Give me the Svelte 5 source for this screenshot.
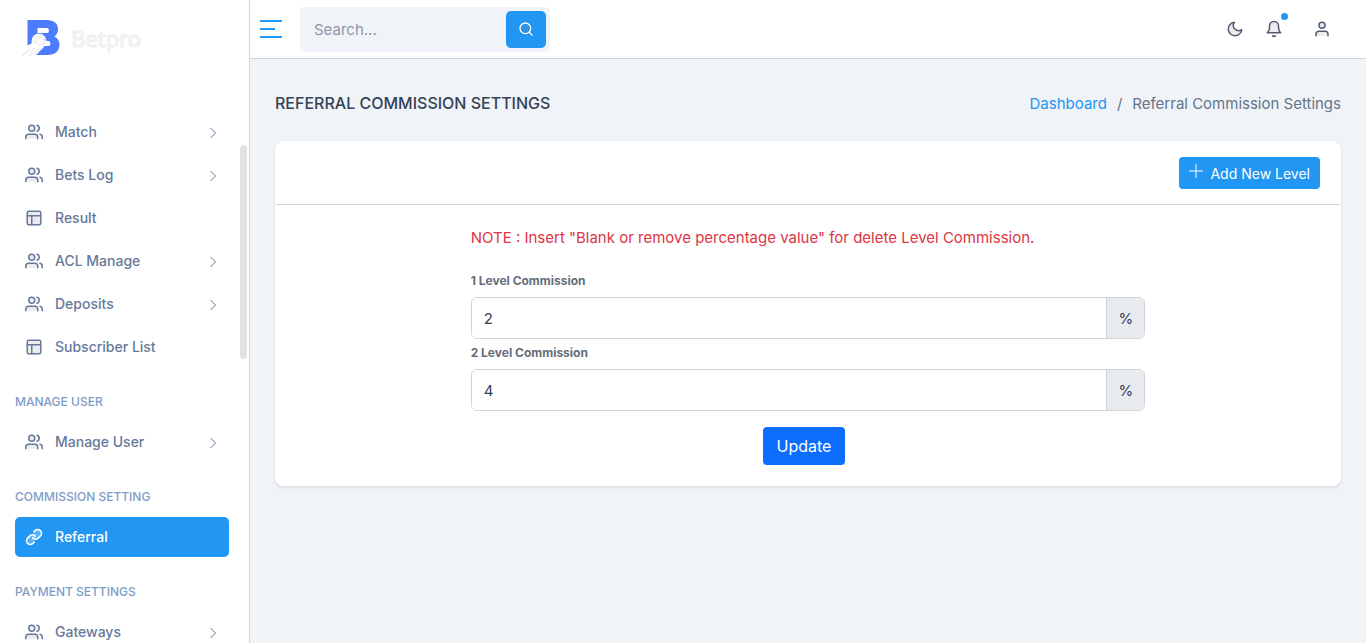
<script>
  const sections = [
    {
      title: '',
      items: [
        { label: 'Match', icon: 'users', children: true },
        { label: 'Bets Log', icon: 'users', children: true },
        { label: 'Result', icon: 'layout' },
        { label: 'ACL Manage', icon: 'users', children: true },
        { label: 'Deposits', icon: 'users', children: true },
        { label: 'Subscriber List', icon: 'layout' }
      ]
    },
    { title: 'Manage User', items: [{ label: 'Manage User', icon: 'users', children: true }] },
    { title: 'Commission Setting', items: [{ label: 'Referral', icon: 'link', active: true }] },
    { title: 'Payment Settings', items: [{ label: 'Gateways', icon: 'users', children: true }] }
  ];

  let levels = $state([{ value: '2' }, { value: '4' }]);
</script>

{#snippet icon(name)}
  <svg class="icon" viewBox="0 0 24 24" aria-hidden="true">
    {#if name === 'users'}
      <path d="M17 21v-2a4 4 0 0 0-4-4H5a4 4 0 0 0-4 4v2" />
      <circle cx="9" cy="7" r="4" />
      <path d="M23 21v-2a4 4 0 0 0-3-3.87M16 3.13a4 4 0 0 1 0 7.75" />
    {:else if name === 'layout'}
      <rect x="3" y="3" width="18" height="18" rx="2" />
      <path d="M3 9h18M9 21V9" />
    {:else if name === 'link'}
      <path d="M10 13a5 5 0 0 0 7.54.54l3-3a5 5 0 0 0-7.07-7.07l-1.72 1.71" />
      <path d="M14 11a5 5 0 0 0-7.54-.54l-3 3a5 5 0 0 0 7.07 7.07l1.71-1.71" />
    {:else if name === 'moon'}
      <path d="M21 12.79A9 9 0 1 1 11.21 3 7 7 0 0 0 21 12.79z" />
    {:else if name === 'bell'}
      <path d="M18 8A6 6 0 0 0 6 8c0 7-3 9-3 9h18s-3-2-3-9" />
      <path d="M13.73 21a2 2 0 0 1-3.46 0" />
    {:else if name === 'user'}
      <path d="M20 21v-2a4 4 0 0 0-4-4H8a4 4 0 0 0-4 4v2" />
      <circle cx="12" cy="7" r="4" />
    {:else if name === 'search'}
      <circle cx="11" cy="11" r="8" />
      <path d="M21 21l-4.35-4.35" />
    {/if}
  </svg>
{/snippet}

<div class="layout">
  <aside class="sidebar">
    <a class="brand" href="#home">
      <svg class="mark" viewBox="0 0 40 38" aria-hidden="true">
        <path fill="#4d7cfe" d="M6.500 1H26c7 0 11 3.500 11 9 0 3.500-1.500 6-3.500 7.500 3 1.500 5 4.500 5 8 0 6.500-4.500 10.500-12 10.500H15l5-6.500-6-7-7.500 4z" />
        <path fill="#fff" d="M16.500 9h9.500q2 0 2 2.500t-2 2.500h-9.500zM20 22h7.500q2 0 2 2.500t-2 2.500H20z" />
        <circle cx="18" cy="22" r="7.500" fill="#fff" />
        <g fill="none" stroke="#d9dce5" stroke-width="0.700">
          <circle cx="18.500" cy="22" r="6" />
          <path d="M16 19l4-1 3 3-1 4-4 1-3-3zM19 16v2M23 21l2-1M18 26l-1 2M15 23l-2 1" />
        </g>
        <path fill="#fff" d="M11 24L2 36l12-8-5 9 9-8-3 7 8-8z" />
        <path fill="none" stroke="#dcdfe6" stroke-width="0.600" d="M10 27L1 37l12-8M14 29l-6 8 11-8M18 30l-4 6" />
      </svg>
      <span>Betpro</span>
    </a>
    <nav>
      {#each sections as section}
        {#if section.title}<h2>{section.title}</h2>{/if}
        <ul>
          {#each section.items as item}
            <li>
              <a class="nav-link" class:active={item.active} href="#{item.label}">
                {@render icon(item.icon)}
                <span>{item.label}</span>
                {#if item.children}
                  <svg class="chevron" viewBox="0 0 8 12" aria-hidden="true"><path d="M1.500 1l5 5-5 5" /></svg>
                {/if}
              </a>
            </li>
          {/each}
        </ul>
      {/each}
    </nav>
    <div class="thumb"></div>
  </aside>

  <div class="main">
    <header>
      <button class="toggle" type="button" aria-label="Toggle menu"><i></i><i></i><i></i></button>
      <form class="search" onsubmit={(e) => e.preventDefault()}>
        <input type="text" placeholder="Search..." aria-label="Search" />
        <button type="submit" aria-label="Search">{@render icon('search')}</button>
      </form>
      <div class="actions">
        <button type="button" aria-label="Dark mode">{@render icon('moon')}</button>
        <button class="bell" type="button" aria-label="Notifications">{@render icon('bell')}<span class="dot"></span></button>
        <button type="button" aria-label="Account">{@render icon('user')}</button>
      </div>
    </header>

    <main>
      <div class="page-head">
        <h1>Referral Commission Settings</h1>
        <div class="crumbs">
          <a href="#dashboard">Dashboard</a><span>/</span><span>Referral Commission Settings</span>
        </div>
      </div>

      <section class="card">
        <div class="card-head">
          <button class="add" type="button">
            <svg viewBox="0 0 14 14" aria-hidden="true"><path d="M7 0v14M0 7h14" /></svg>
            Add New Level
          </button>
        </div>
        <form class="levels" onsubmit={(e) => e.preventDefault()}>
          <p>NOTE : Insert "Blank or remove percentage value" for delete Level Commission.</p>
          {#each levels as level, i}
            <label for="level-{i}">{i + 1} Level Commission</label>
            <div class="group">
              <input id="level-{i}" type="text" bind:value={level.value} />
              <span>%</span>
            </div>
          {/each}
          <button class="update" type="submit">Update</button>
        </form>
      </section>
    </main>
  </div>
</div>

<style>
  :global(body) {
    margin: 0;
    background: #f0f3f8;
    color: #334257;
    font-family: Inter, sans-serif;
    font-size: 15px;
  }
  * { box-sizing: border-box; }
  button, input { font: inherit; color: inherit; }
  button { border: 0; padding: 0; background: none; cursor: pointer; }
  a { text-decoration: none; }

  .icon {
    display: block;
    flex: none;
    width: 18px;
    height: 18px;
    fill: rgba(128, 128, 128, 0.15);
    stroke: currentColor;
    stroke-width: 2;
    stroke-linecap: round;
    stroke-linejoin: round;
  }

  .layout { display: flex; height: 100vh; overflow: hidden; }

  .sidebar {
    position: relative;
    flex: none;
    width: 250px;
    overflow: hidden;
    background: #fff;
    border-right: 1px solid #d3d4d8;
  }
  .brand { display: flex; align-items: center; gap: 10px; height: 76px; padding-left: 21px; }
  .mark { width: 40px; height: 38px; }
  .brand span {
    color: #fdfdfd;
    font: 22px "Noto Sans", sans-serif;
    line-height: 32px;
    -webkit-text-stroke: 1px #ececee;
  }
  nav { padding: 36px 20px 0 15px; }
  nav ul { display: flex; flex-direction: column; gap: 3px; margin: 0; padding: 0; list-style: none; }
  nav h2 {
    margin: 0;
    padding: 26px 0 11px;
    color: #7e9cc7;
    font-size: 12px;
    font-weight: 500;
    line-height: 18px;
    text-transform: uppercase;
  }
  .nav-link {
    display: flex;
    align-items: center;
    gap: 12px;
    height: 40px;
    padding: 0 12px 0 10px;
    border-radius: 5px;
    color: #67799a;
    font-size: 14px;
    font-weight: 500;
    line-height: 18px;
  }
  .nav-link.active { background: #2196f3; color: #fff; }
  .nav-link.active .icon { fill: rgba(255, 255, 255, 0.25); }
  .chevron { width: 8px; height: 12px; margin: 2px 0 0 auto; fill: none; stroke: currentColor; }
  .thumb {
    position: absolute;
    top: 145px;
    right: 2px;
    width: 7px;
    height: 214px;
    border-radius: 4px;
    background: #e2e2e2;
  }

  .main { flex: 1; min-width: 0; overflow: auto; }
  header {
    display: flex;
    align-items: center;
    height: 59px;
    padding: 0 35px 0 10px;
    background: #fff;
    border-bottom: 1px solid #d3d4d8;
  }
  .toggle { display: flex; flex-direction: column; gap: 6px; width: 22px; margin-right: 18px; }
  .toggle i { width: 22px; height: 2px; background: #2196f3; }
  .toggle i:nth-child(2) { width: 15px; }
  .search {
    display: flex;
    align-items: center;
    width: 250px;
    height: 45px;
    padding-right: 4px;
    border-radius: 5px;
    background: #f0f3f8;
  }
  .search input {
    flex: 1;
    min-width: 0;
    height: 40px;
    padding: 0 14px;
    border: 0;
    outline: 0;
    background: none;
  }
  .search input::placeholder { color: #8e98a8; opacity: 1; }
  .search button {
    display: grid;
    place-items: center;
    width: 40px;
    height: 37px;
    border-radius: 5px;
    background: #2196f3;
    color: #fff;
  }
  .search .icon { width: 16px; height: 16px; }
  .actions { display: flex; gap: 21px; margin-left: auto; color: #555b75; }
  .bell { position: relative; margin-right: 9px; }
  .dot {
    position: absolute;
    top: -7px;
    right: -5px;
    width: 7px;
    height: 7px;
    border-radius: 50%;
    background: #2196f3;
  }

  main { padding: 32px 25px; }
  .page-head { display: flex; justify-content: space-between; align-items: center; height: 24px; margin-bottom: 26px; }
  h1 { margin: 0; font-size: 16px; font-weight: 500; text-transform: uppercase; }
  .crumbs { display: flex; gap: 10px; color: #64748b; }
  .crumbs a { color: #2196f3; }

  .card {
    border: 1px solid #fff;
    border-radius: 8px;
    background: #fff;
    box-shadow: 0 1px 3px rgba(50, 70, 90, 0.15);
  }
  .card-head { display: flex; justify-content: flex-end; padding: 15px 20px; border-bottom: 1px solid #d3d4d8; }
  .add {
    display: flex;
    align-items: center;
    gap: 7px;
    height: 32px;
    padding: 0 10px;
    border-radius: 4px;
    background: #2196f3;
    color: #fff;
    font-size: 14px;
  }
  .add svg { width: 14px; height: 14px; margin-bottom: 4px; fill: none; stroke: currentColor; }
  .levels {
    display: flex;
    flex-direction: column;
    width: calc((100% - 40px) * 2 / 3 - 8px);
    margin: 0 auto;
    padding-bottom: 20px;
  }
  .levels p { margin: 21px 0 17px; color: #dc3545; line-height: 24px; }
  .levels label { margin: 5px 0 7px; color: #636e79; font-size: 12px; font-weight: 700; line-height: 18px; }
  .group { display: flex; height: 42px; border: 1px solid #d3d4d8; border-radius: 6px; overflow: hidden; }
  .group input { flex: 1; min-width: 0; padding: 0 12px; border: 0; outline: 0; background: #fff; }
  .group span {
    display: grid;
    place-items: center;
    width: 38px;
    border-left: 1px solid #d3d4d8;
    background: #e7ebef;
  }
  .update {
    align-self: center;
    height: 38px;
    margin: 16px 8px 0 0;
    padding: 0 14px;
    border-radius: 4px;
    background: #0d6efd;
    color: #fff;
    font-size: 16px;
  }
</style>
